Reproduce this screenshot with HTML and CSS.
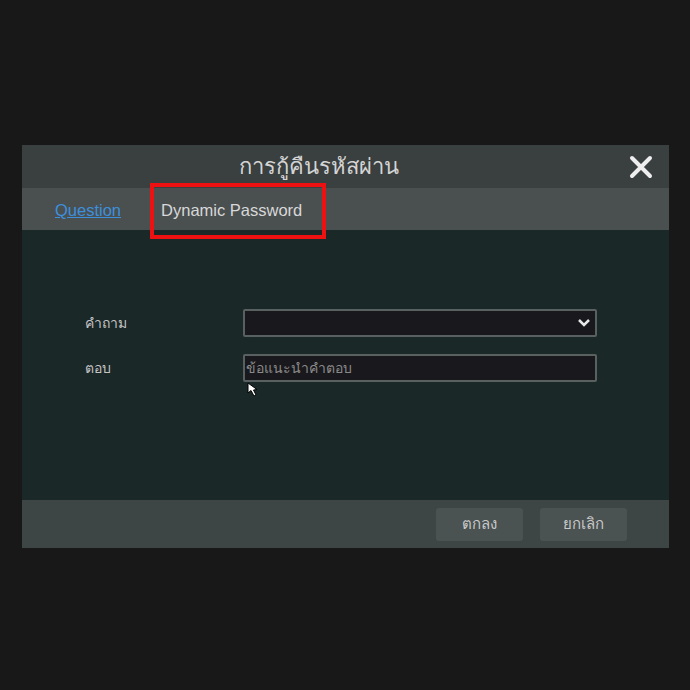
FILE: index.html
```html
<!DOCTYPE html>
<html lang="th">
<head>
  <meta charset="UTF-8">
  <title>การกู้คืนรหัสผ่าน</title>
  <link rel="stylesheet" href="styles.css">
</head>
<body>
  <div class="dialog">
    <!-- Title bar -->
    <div class="titlebar">
      <span class="title">การกู้คืนรหัสผ่าน</span>
      <span class="close">
        <svg width="24" height="24" viewBox="0 0 24 24">
          <path d="M3 3 L21 21 M21 3 L3 21" stroke="#eeeeee" stroke-width="4" stroke-linecap="round"/>
        </svg>
      </span>
    </div>

    <!-- Tabs -->
    <div class="tabs">
      <a class="tab active">Question</a>
      <a class="tab">Dynamic Password</a>
    </div>
    <div class="highlight"></div>

    <!-- Form -->
    <div class="content">
      <div class="row">
        <label>คำถาม</label>
        <div class="field select">
          <svg width="14" height="10" viewBox="0 0 14 10">
            <path d="M2 2 L7 7 L12 2" stroke="#e8e8e8" stroke-width="2.5" fill="none"/>
          </svg>
        </div>
      </div>
      <div class="row">
        <label>ตอบ</label>
        <div class="field">
          <span class="placeholder">ข้อแนะนำคำตอบ</span>
        </div>
      </div>
      <svg class="pointer" width="14" height="16" viewBox="0 0 14 16">
        <path d="M1 1 L1 11 L4 8.5 L7 14 L9 13 L6.5 8 L10 7.5 Z" fill="#ffffff" stroke="#000" stroke-width="1"/>
      </svg>
    </div>

    <!-- Footer -->
    <div class="footer">
      <button class="btn">ตกลง</button>
      <button class="btn">ยกเลิก</button>
    </div>
  </div>
</body>
</html>
```

FILE: styles.css
```css
body {
  margin: 0;
  padding: 0;
  background-color: #181818;
  font-family: "Noto Sans", "DejaVu Sans", "Liberation Sans", sans-serif;
  height: 690px;
}
.dialog {
  position: relative;
  width: 647px;
  margin: 145px 0 0 22px;
}
.titlebar {
  height: 43px;
  background-color: #3a3f3f;
  display: flex;
  align-items: center;
  justify-content: center;
  position: relative;
}
.title {
  color: #d4d4d4;
  font-size: 22px;
  padding-right: 54px;
}
.close {
  position: absolute;
  right: 16px;
  top: 10px;
}
.tabs {
  height: 42px;
  box-sizing: border-box;
  padding-top: 3px;
  background-color: #4a4f50;
  display: flex;
  align-items: center;
  padding-left: 33px;
  gap: 40px;
}
.tab {
  font-family: "Liberation Sans", Arial, sans-serif;
  font-size: 16.5px;
  color: #d8d8d8;
}
.tab.active {
  color: #3d8fdc;
  text-decoration: underline;
}
.highlight {
  position: absolute;
  z-index: 2;
  left: 128px;
  top: 38px;
  width: 168px;
  height: 48px;
  border: 4px solid #ee1111;
}
.content {
  height: 270px;
  background-color: #1b2828;
  padding-top: 79px;
  box-sizing: border-box;
  position: relative;
}
.row {
  display: flex;
  align-items: center;
  padding-left: 63px;
  margin-bottom: 17px;
}
.row label {
  width: 158px;
  color: #c4c4c4;
  font-size: 14px;
}
.field {
  width: 350px;
  height: 24px;
  background-color: #19181c;
  border: 2px solid #596060;
  border-radius: 2px;
  display: flex;
  align-items: center;
}
.select {
  justify-content: flex-end;
  padding-right: 4px;
  width: 346px;
}
.placeholder {
  color: #8a8a8a;
  font-size: 14px;
  padding-left: 1px;
}
.pointer {
  position: absolute;
  left: 225px;
  top: 152px;
}
.footer {
  height: 48px;
  background-color: #3d4545;
  display: flex;
  justify-content: flex-end;
  align-items: center;
  gap: 17px;
  padding-right: 42px;
}
.btn {
  width: 87px;
  height: 33px;
  background-color: #4a5252;
  border: none;
  border-radius: 3px;
  color: #c8c8c8;
  font-size: 15px;
  font-family: inherit;
}
```
